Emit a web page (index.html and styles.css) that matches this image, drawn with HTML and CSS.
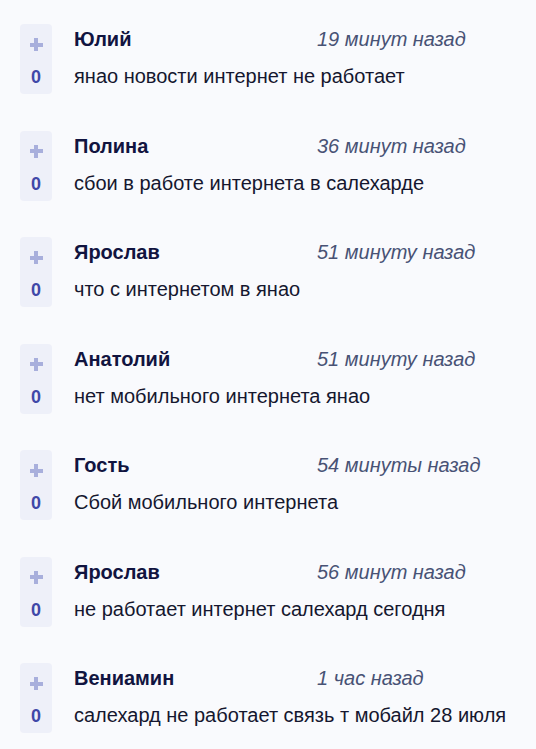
FILE: index.html
```html
<!DOCTYPE html>
<html lang="ru">
<head>
<meta charset="utf-8">
<link rel="stylesheet" href="styles.css">
</head>
<body>
<div class="list">
  <div class="item">
    <div class="vote"><span class="plus"></span><span class="count">0</span></div>
    <div class="body">
      <div class="head"><span class="name">Юлий</span><span class="time">19 минут назад</span></div>
      <div class="text">янао новости интернет не работает</div>
    </div>
  </div>
  <div class="item">
    <div class="vote"><span class="plus"></span><span class="count">0</span></div>
    <div class="body">
      <div class="head"><span class="name">Полина</span><span class="time">36 минут назад</span></div>
      <div class="text">сбои в работе интернета в салехарде</div>
    </div>
  </div>
  <div class="item">
    <div class="vote"><span class="plus"></span><span class="count">0</span></div>
    <div class="body">
      <div class="head"><span class="name">Ярослав</span><span class="time">51 минуту назад</span></div>
      <div class="text">что с интернетом в янао</div>
    </div>
  </div>
  <div class="item">
    <div class="vote"><span class="plus"></span><span class="count">0</span></div>
    <div class="body">
      <div class="head"><span class="name">Анатолий</span><span class="time">51 минуту назад</span></div>
      <div class="text">нет мобильного интернета янао</div>
    </div>
  </div>
  <div class="item">
    <div class="vote"><span class="plus"></span><span class="count">0</span></div>
    <div class="body">
      <div class="head"><span class="name">Гость</span><span class="time">54 минуты назад</span></div>
      <div class="text">Сбой мобильного интернета</div>
    </div>
  </div>
  <div class="item">
    <div class="vote"><span class="plus"></span><span class="count">0</span></div>
    <div class="body">
      <div class="head"><span class="name">Ярослав</span><span class="time">56 минут назад</span></div>
      <div class="text">не работает интернет салехард сегодня</div>
    </div>
  </div>
  <div class="item">
    <div class="vote"><span class="plus"></span><span class="count">0</span></div>
    <div class="body">
      <div class="head"><span class="name">Вениамин</span><span class="time">1 час назад</span></div>
      <div class="text">салехард не работает связь т мобайл 28 июля</div>
    </div>
  </div>
</div>
</body>
</html>
```

FILE: styles.css
```css
html, body {
  margin: 0;
  padding: 0;
  background: #f9fafd;
}
body {
  font-family: "Liberation Sans", Arial, sans-serif;
  color: #1b1d3a;
}
.list {
  display: flex;
  flex-direction: column;
  gap: 36.5px;
  padding: 24px 0 0 20px;
}
.item {
  display: flex;
  align-items: flex-start;
  gap: 22px;
}
.vote {
  width: 32px;
  height: 70px;
  background: #eef0f9;
  border-radius: 4px;
  display: flex;
  flex-direction: column;
  align-items: center;
  box-sizing: border-box;
  padding-top: 14px;
}
.plus {
  position: relative;
  width: 13px;
  height: 13px;
  display: block;
}
.plus::before,
.plus::after {
  content: "";
  position: absolute;
  background: #a8afdc;
}
.plus::before {
  left: 0;
  top: 4.5px;
  width: 13px;
  height: 4px;
}
.plus::after {
  left: 4.5px;
  top: 0;
  width: 4px;
  height: 13px;
}
.count {
  margin-top: 16px;
  font-size: 18px;
  font-weight: bold;
  color: #4048a8;
  line-height: 20px;
}
.body {
  display: flex;
  flex-direction: column;
  padding-top: 3px;
}
.head {
  display: flex;
  align-items: baseline;
  height: 24px;
  line-height: 24px;
}
.name {
  width: 243px;
  font-size: 20px;
  font-weight: bold;
  color: #111440;
}
.time {
  font-size: 20px;
  font-style: italic;
  color: #485275;
}
.text {
  margin-top: 13px;
  font-size: 20px;
  line-height: 24px;
  color: #15172f;
}
```
